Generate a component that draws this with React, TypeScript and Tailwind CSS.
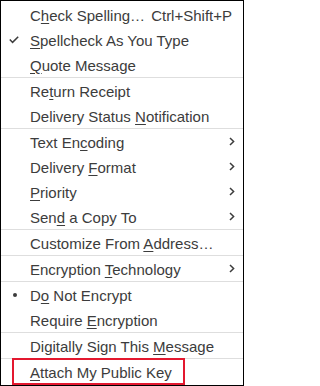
import React from "react";

type Item =
  | { type: "sep" }
  | {
      type: "item";
      pre: string;
      key: string;
      post: string;
      mark?: "check" | "bullet";
      sub?: boolean;
      shortcut?: string;
      highlight?: boolean;
    };

const items: Item[] = [
  { type: "item", pre: "C", key: "h", post: "eck Spelling…", shortcut: "Ctrl+Shift+P" },
  { type: "item", pre: "", key: "S", post: "pellcheck As You Type", mark: "check" },
  { type: "item", pre: "", key: "Q", post: "uote Message" },
  { type: "sep" },
  { type: "item", pre: "Re", key: "t", post: "urn Receipt" },
  { type: "item", pre: "Delivery Status ", key: "N", post: "otification" },
  { type: "sep" },
  { type: "item", pre: "Text En", key: "c", post: "oding", sub: true },
  { type: "item", pre: "Delivery ", key: "F", post: "ormat", sub: true },
  { type: "item", pre: "", key: "P", post: "riority", sub: true },
  { type: "item", pre: "Sen", key: "d", post: " a Copy To", sub: true },
  { type: "sep" },
  { type: "item", pre: "Customize From ", key: "A", post: "ddress…" },
  { type: "sep" },
  { type: "item", pre: "Encryption ", key: "T", post: "echnology", sub: true },
  { type: "sep" },
  { type: "item", pre: "D", key: "o", post: " Not Encrypt", mark: "bullet" },
  { type: "item", pre: "Require ", key: "E", post: "ncryption" },
  { type: "sep" },
  { type: "item", pre: "Digitally Sign This ", key: "M", post: "essage" },
  { type: "sep" },
  { type: "item", pre: "", key: "A", post: "ttach My Public Key", highlight: true },
];

function Check() {
  return (
    <svg width="10" height="8" viewBox="0 0 10 8" className="block">
      <path d="M0.8 3.4 L3.6 6.4 L9.2 0.8" fill="none" stroke="#3c3c3c" strokeWidth="1.5" />
    </svg>
  );
}

function Chevron() {
  return (
    <svg width="6" height="9" viewBox="0 0 6 9" className="block">
      <path d="M1 1 L4.6 4.5 L1 8" fill="none" stroke="#3c3c3c" strokeWidth="1.5" />
    </svg>
  );
}

export default function App() {
  return (
    <div
      className="relative w-[244px] h-[386px] border border-black bg-white py-px text-[15px] text-[#3c3c3c]"
      style={{ fontFamily: '"Liberation Sans", Arial, sans-serif' }}
    >
      {items.map((it, i) =>
        it.type === "sep" ? (
          <div key={i} className="h-px bg-[#dedede]" />
        ) : (
          <div key={i} className="flex h-[25px] items-center leading-none">
            <div className="flex w-[29px] shrink-0 items-center pl-[8px]">
              {it.mark === "check" && <Check />}
              {it.mark === "bullet" && (
                <div className="ml-[4px] h-[4px] w-[4px] rounded-full bg-[#3c3c3c]" />
              )}
            </div>
            <div className="flex-1 whitespace-nowrap pt-[1px]">
              {it.pre}
              <span className="underline decoration-1 underline-offset-[2px]">{it.key}</span>
              {it.post}
            </div>
            {it.shortcut && (
              <div className="mr-[11px] whitespace-nowrap pt-[1px]">{it.shortcut}</div>
            )}
            {it.sub && (
              <div className="mr-[8px]">
                <Chevron />
              </div>
            )}
          </div>
        )
      )}
      <div className="pointer-events-none absolute left-[11px] top-[357px] h-[27px] w-[173px] border-2 border-[#e3182f]" />
    </div>
  );
}
